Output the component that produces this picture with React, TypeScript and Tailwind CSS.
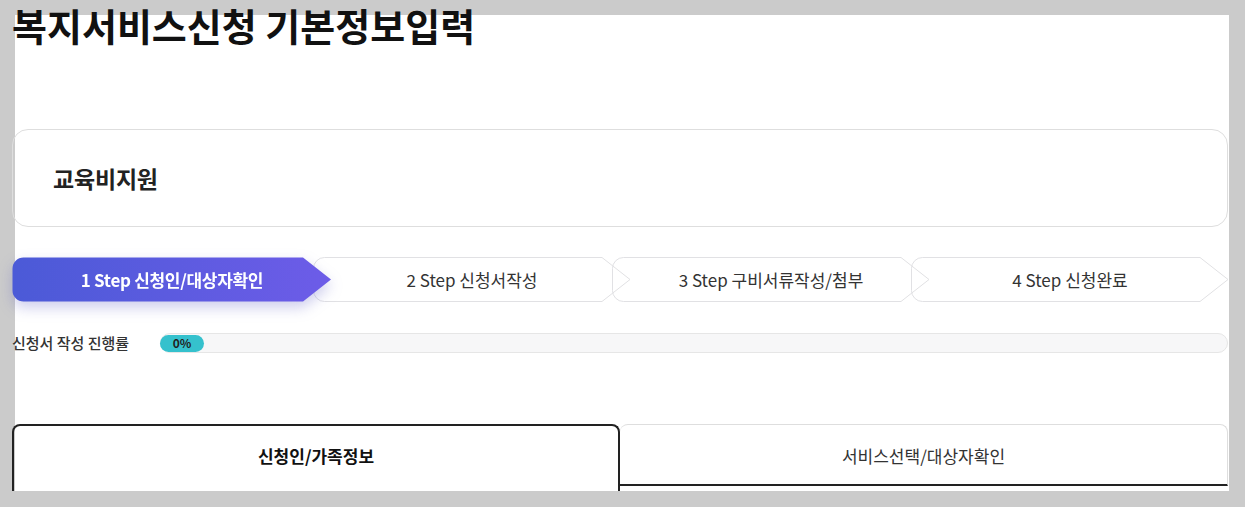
import React from "react";

const FONT = { fontFamily: '"Noto Sans CJK KR", "Noto Sans", sans-serif' };

function StepShape({ w, h, filled }: { w: number; h: number; filled?: boolean }) {
  const d = 29;
  const r = 11;
  const path = `M${r + 0.5},0.5 H${w - d} L${w - 1},${h / 2} L${w - d},${h - 0.5} H${r + 0.5} A${r},${r} 0 0 1 0.5,${h - 0.5 - r} V${r + 0.5} A${r},${r} 0 0 1 ${r + 0.5},0.5 Z`;
  return (
    <svg className="absolute inset-0" width={w} height={h} viewBox={`0 0 ${w} ${h}`}>
      <defs>
        <linearGradient id="stepgrad" x1="0" y1="0" x2="1" y2="0">
          <stop offset="0%" stopColor="#4b5ad7" />
          <stop offset="100%" stopColor="#6d5ce8" />
        </linearGradient>
      </defs>
      {filled ? (
        <path d={path} fill="url(#stepgrad)" stroke="none" strokeLinejoin="round" />
      ) : (
        <path d={path} fill="none" stroke="#e1e1e4" strokeWidth="1" strokeLinejoin="round" />
      )}
    </svg>
  );
}

const steps = [
  "1 Step 신청인/대상자확인",
  "2 Step 신청서작성",
  "3 Step 구비서류작성/첨부",
  "4 Step 신청완료",
];

export default function App() {
  return (
    <div className="w-[1245px] h-[507px] bg-[#cbcbcb] pt-[15px] pl-[15px] pr-[16px] pb-[16px] overflow-hidden" style={FONT}>
      <div className="bg-white w-full h-full relative">
        <div className="-ml-[3px] w-[1217px] flex flex-col">
          <h1 className="-mt-[12px] text-[38px] leading-[44px] font-bold text-[#111] tracking-[0px] whitespace-nowrap">
            복지서비스신청 기본정보입력
          </h1>

          <div className="mt-[82px] w-[1216px] h-[98px] border border-[#dedede] rounded-[16px] flex items-center pl-[40px]">
            <span className="text-[23px] font-bold text-[#222] tracking-[-0.2px]">교육비지원</span>
          </div>

          <div className="mt-[30px] flex h-[45px]">
            {steps.map((s, i) => (
              <div
                key={s}
                className={
                  i === 0
                    ? "relative z-10 w-[320px] h-[45px] shrink-0 flex items-center justify-center drop-shadow-[0_6px_7px_rgba(80,80,190,0.28)]"
                    : "relative w-[318px] h-[45px] shrink-0 -ml-[19px] flex items-center justify-center"
                }
              >
                <StepShape w={i === 0 ? 320 : 318} h={45} filled={i === 0} />
                <span
                  className={
                    i === 0
                      ? "relative text-[17px] font-bold text-white tracking-[-0.3px]"
                      : "relative text-[17px] text-[#333]"
                  }
                >
                  {s}
                </span>
              </div>
            ))}
          </div>

          <div className="mt-[31px] flex items-center h-[20px]">
            <span className="w-[148px] shrink-0 text-[15px] text-[#333] font-medium">신청서 작성 진행률</span>
            <div className="w-[1068px] h-[20px] rounded-full border border-[#e6e6e6] bg-[#f7f7f8] flex items-center">
              <div className="w-[44px] h-[17px] -ml-px rounded-full bg-[#35c1cd] flex items-center justify-center">
                <span className="text-[12px] font-bold text-[#222] leading-none">0%</span>
              </div>
            </div>
          </div>

          <div className="mt-[71px] flex items-start w-[1216px]">
            <div className="w-[608px] h-[67px] border-t-2 border-l-2 border-r-2 border-[#222] rounded-t-[8px] flex justify-center pt-[18px]">
              <span className="text-[17px] leading-[24px] font-bold text-[#111]">신청인/가족정보</span>
            </div>
            <div className="w-[608px] h-[62px] border-t border-r border-[#dedede] border-b-2 border-b-[#222] rounded-tr-[8px] rounded-tl-[8px] flex justify-center pt-[19px]">
              <span className="text-[17px] leading-[24px] text-[#333]">서비스선택/대상자확인</span>
            </div>
          </div>
        </div>
      </div>
    </div>
  );
}
